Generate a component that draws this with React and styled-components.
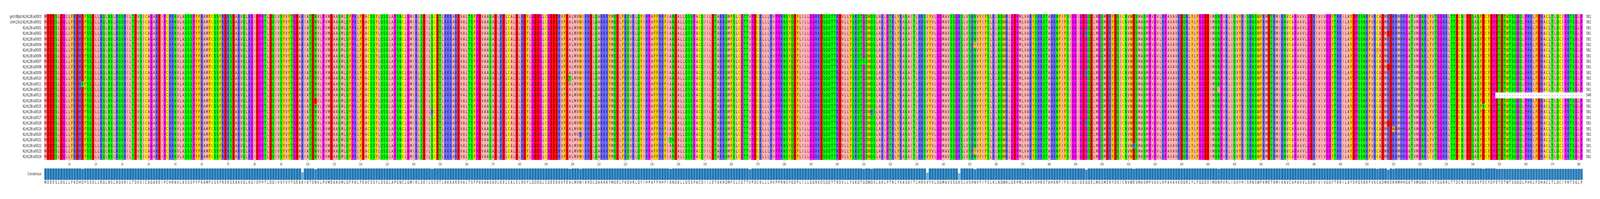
import React from "react";
import styled, { createGlobalStyle } from "styled-components";

const FIG_W = 6089;
const COL_W = 10.0826;
const ROW_H = 14.385;
const BAR_H = 30;

const consensus = [
  "MDEESLDGLL", "FKDHDFSSDL", "LRQLNSLRQS", "RILTDVSICA", "GAREIPCHRN", "VLASSSPYFR",
  "AMFCSSFREK", "SEAKVQLKGI", "DPPTLDQIVS", "YVYTGEARIA", "TDNVLPVMEA", "ASMLQFPKLF",
  "EACSSYLQSQ", "LAPSNCLGMI", "RLSEILSCET", "LKKKAREVAL", "TSFPEVAASA", "DLKELCALEL",
  "RDYLGDDGLC", "GEEEKVFEAL", "MVWIKHDLQA", "RKRYMQELFK", "QVRLQYIHPA", "FFHHFIANDA",
  "LLQSSPACQI", "ILETAKRQMF", "SLCGTTVPDC", "KLLLHVPPRN", "SYQDFLILLG", "GRKDSQQTTR",
  "DVLLYSKQTG", "QWQSLAKLPT", "RLYKASAITL", "HRSVYVLGGM", "AVSSGKSLVS", "HNVYIFSLKL",
  "NQWRLGEPML", "VARYSHRSTA", "HKNFIFSIGG", "IGEGQELMGS", "MERYDSICNV", "WESMASMPVG",
  "VLHPAVAVKD", "QRLYLFGGED", "IMQNPVRLIQ", "VYHISRNSWF", "KMETRMIKNV", "CAPAVVLGER",
  "IVIVGGYTRR", "ILAYDPQSNK", "FVKCADMKDR", "RMHHGATVMG", "NKLYVTGGRR", "LTTDCNIEDS",
  "ASFDCYDPET", "DTWTSQGQLP", "HKLFDHACLT", "LQCIPRTSGL", "P",
].join("").split("");

const names = [
  "grch38p0:KLHL38:a0003",
  "chm13v2:KLHL38:a0001",
  ...Array.from({ length: 24 }, (_, i) => `KLHL38:a${String(i + 1).padStart(4, "0")}`),
];

// column (1-based) -> letter and the rows (1-based) that differ from consensus
const variants = [
  [15, "N", [13]],
  [98, "H", [1, 4, 5, 9, 11, 12, 16, 18, 21]],
  [103, "D", [16]],
  [103, "T", [19]],
  [147, "R", [18]],
  [199, "T", [12]],
  [203, "R", [22]],
  [237, "T", [23]],
  [267, "I", [8, 17]],
  [310, "S", [9]],
  [313, "H", [18]],
  [334, "I", [1, 4, 5, 9, 11, 12, 16, 18, 20, 21]],
  [346, "R", [1, 4, 5, 9, 11, 12, 13, 16, 18, 20, 21]],
  [352, "Y", [6, 25]],
  [373, "H", [25]],
  [394, "R", [4, 11, 20]],
  [412, "K", [24]],
  [444, "I", [14]],
  [504, "Y", [7]],
  [508, "E", [4, 10, 20]],
  [510, "W", [21]],
  [524, "C", [26]],
  [544, "N", [17]],
];

const rows = names.map((name, r) => {
  const seq = [...consensus];
  variants.forEach(([col, letter, list]) => {
    if (list.includes(r + 1)) seq[col - 1] = letter;
  });
  if (r === 14) seq.fill("-", 548);
  return { name, seq, length: seq.filter((c) => c !== "-").length };
});

const freq = consensus.map((c, i) => rows.filter((row) => row.seq[i] === c).length / rows.length);

const zappo = {
  A: "#ffafaf", I: "#ffafaf", L: "#ffafaf", M: "#ffafaf", V: "#ffafaf",
  D: "#ff0000", E: "#ff0000",
  S: "#00ff00", T: "#00ff00", N: "#00ff00", Q: "#00ff00",
  G: "#ff00ff", P: "#ff00ff",
  F: "#ffc800", W: "#ffc800", Y: "#ffc800",
  K: "#6464ff", R: "#6464ff", H: "#6464ff",
  C: "#ffff00",
  "-": "#ffffff",
};

const GlobalStyle = createGlobalStyle`
  html, body {
    margin: 0;
    background: #fff;
    overflow: hidden;
  }
  body {
    font-family: "DejaVu Sans", "Liberation Sans", sans-serif;
    font-size: 9.72px;
    color: #1c1c1c;
  }
`;

const Figure = styled.div`
  width: ${FIG_W}px;
  height: 510px;
  padding-top: 36px;
  box-sizing: border-box;
  overflow: hidden;
  transform-origin: 0 0;
`;

const Track = styled.div`
  display: grid;
  grid-template-columns: 157.5px ${COL_W * 581}px auto;
  column-gap: 10.5px;
  height: ${(p) => p.$h}px;
  line-height: ${(p) => p.$h}px;
`;

const Label = styled.div`
  text-align: right;
  white-space: nowrap;
`;

const Cells = styled.div`
  display: grid;
  grid-template-columns: repeat(581, ${COL_W}px);
`;

const Cell = styled.span`
  background: ${(p) => zappo[p.$aa]};
  text-align: center;
  color: #141414;
`;

const PlainCell = styled.span`
  text-align: center;
  color: #222;
`;

const TickCell = styled.div`
  display: flex;
  flex-direction: column;
  align-items: center;
`;

const TickMark = styled.i`
  display: block;
  width: 1px;
  height: 3.5px;
  background: #333;
  flex: none;
`;

const TickLabel = styled.span`
  margin-top: 2px;
  font-size: 9.4px;
  line-height: 11px;
  color: #333;
  transform: scaleX(0.72);
  white-space: nowrap;
`;

const BarCell = styled.div`
  display: flex;
  align-items: flex-end;
  height: ${BAR_H}px;
`;

const Bar = styled.div`
  width: 100%;
  box-sizing: border-box;
  border-left: 1px solid #c4d6e4;
  border-top: 1px solid #c4d6e4;
`;

const ConsensusLabel = styled(Label)`
  color: #2c2c2c;
`;

export default function App() {
  // the browser may open narrower than the figure: squeeze it so every column stays in frame
  const fit = Math.min(1, window.innerWidth / FIG_W);
  return (
    <Figure style={{ transform: `scaleX(${fit})` }}>
      <GlobalStyle />
      {rows.map((row) => (
        <Track key={row.name} $h={ROW_H}>
          <Label>{row.name}</Label>
          <Cells>
            {row.seq.map((aa, i) => (
              <Cell key={i} $aa={aa}>{aa}</Cell>
            ))}
          </Cells>
          <div>{row.length}</div>
        </Track>
      ))}
      <Track $h={21}>
        <span />
        <Cells>
          {consensus.map((_, i) => (
            <TickCell key={i}>
              {(i + 1) % 10 === 0 && (
                <>
                  <TickMark />
                  <TickLabel>{i + 1}</TickLabel>
                </>
              )}
            </TickCell>
          ))}
        </Cells>
      </Track>
      <Track $h={BAR_H}>
        <ConsensusLabel>Consensus</ConsensusLabel>
        <Cells>
          {consensus.map((_, i) => (
            <BarCell key={i}>
              <Bar
                style={{
                  height: `${BAR_H * freq[i]}px`,
                  background: `rgba(31, 119, 180, ${freq[i]})`,
                }}
              />
            </BarCell>
          ))}
        </Cells>
      </Track>
      <Track $h={14.4}>
        <span />
        <Cells>
          {consensus.map((aa, i) => (
            <PlainCell key={i}>{aa}</PlainCell>
          ))}
        </Cells>
      </Track>
    </Figure>
  );
}
